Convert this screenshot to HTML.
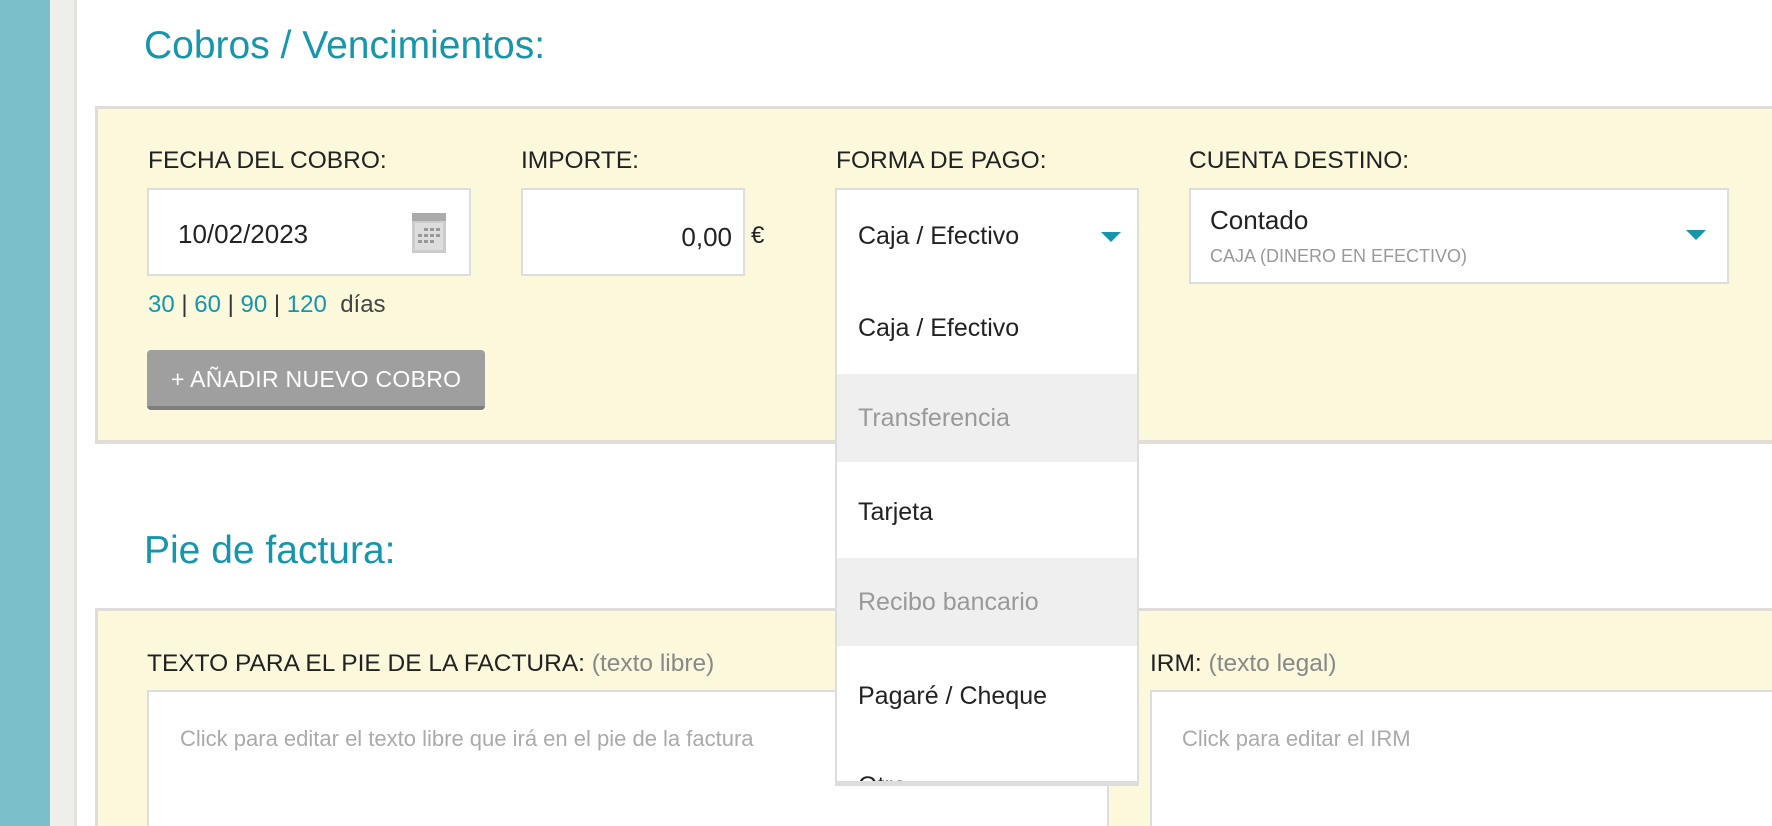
<!DOCTYPE html>
<html style="width:1772px;height:826px;overflow:hidden"><head><meta charset="utf-8"><style>
*{box-sizing:border-box;margin:0;padding:0}
body{width:1772px;height:826px;overflow:hidden;background:#fff;font-family:"Liberation Sans",sans-serif;position:relative;color:#222}
.abs{position:absolute}
.h{color:#1596ab;font-size:39px;white-space:nowrap}
.lbl{font-size:24.5px;color:#222;white-space:nowrap}
.panel{background:#fcf8dc;border:3px solid #e0ddd8}
.box{background:#fff;border:2px solid #ddd}
.item{position:absolute;left:0;width:100%;height:92px;font-size:25px;padding-left:21px;line-height:92px}
</style></head><body>
<div class="abs" style="left:0;top:0;width:50px;height:826px;background:#7bbfcb"></div>
<div class="abs" style="left:50px;top:0;width:24px;height:826px;background:#efefe9"></div>
<div class="abs" style="left:74px;top:0;width:3px;height:826px;background:#e2e2dc"></div>

<div class="abs h" style="left:144px;top:24px">Cobros / Vencimientos:</div>

<div class="abs panel" style="left:95px;top:106px;width:1690px;height:338px;border-bottom-width:4px"></div>
<div class="abs lbl" style="left:148px;top:147px">FECHA DEL COBRO:</div>
<div class="abs lbl" style="left:521px;top:147px">IMPORTE:</div>
<div class="abs lbl" style="left:836px;top:147px">FORMA DE PAGO:</div>
<div class="abs lbl" style="left:1189px;top:147px">CUENTA DESTINO:</div>

<div class="abs box" style="left:147px;top:188px;width:324px;height:88px"></div>
<div class="abs" style="left:178px;top:219px;font-size:26px">10/02/2023</div>
<svg class="abs" style="left:412px;top:211px" width="34" height="42" viewBox="0 0 34 42"><rect x="0" y="2" width="34" height="40" fill="#ccc"/><rect x="0" y="2" width="34" height="8" fill="#aaa"/><rect x="3" y="12" width="28" height="27" fill="#ddd"/><g fill="#999"><rect x="12" y="17" width="4" height="3"/><rect x="18" y="17" width="4" height="3"/><rect x="24" y="17" width="4" height="3"/><rect x="6" y="23" width="4" height="3"/><rect x="12" y="23" width="4" height="3"/><rect x="18" y="23" width="4" height="3"/><rect x="24" y="23" width="4" height="3"/><rect x="6" y="29" width="4" height="3"/><rect x="12" y="29" width="4" height="3"/><rect x="18" y="29" width="4" height="3"/></g></svg>
<div class="abs" style="left:148px;top:291px;font-size:24px;color:#1596ab;white-space:nowrap">30 <span style="color:#333">|</span> 60 <span style="color:#333">|</span> 90 <span style="color:#333">|</span> 120 &nbsp;<span style="color:#444">días</span></div>
<div class="abs" style="left:147px;top:350px;width:338px;height:60px;background:#9e9f9e;border-bottom:4px solid #7d7e7d;border-radius:4px;color:#fff;font-size:23px;line-height:58px;padding-left:24px;white-space:nowrap;letter-spacing:0.3px">+ AÑADIR NUEVO COBRO</div>

<div class="abs box" style="left:521px;top:188px;width:224px;height:88px"></div>
<div class="abs" style="left:600px;top:222px;width:132px;text-align:right;font-size:26px">0,00</div>
<div class="abs" style="left:751px;top:222px;font-size:24px">€</div>

<div class="abs box" style="left:1189px;top:188px;width:540px;height:96px"></div>
<div class="abs" style="left:1210px;top:205px;font-size:26px">Contado</div>
<div class="abs" style="left:1210px;top:246px;font-size:18px;color:#999;white-space:nowrap">CAJA (DINERO EN EFECTIVO)</div>
<div class="abs" style="left:1686px;top:230px;width:0;height:0;border-left:10px solid transparent;border-right:10px solid transparent;border-top:10px solid #1596ab"></div>

<div class="abs h" style="left:144px;top:529px">Pie de factura:</div>
<div class="abs panel" style="left:95px;top:608px;width:1690px;height:230px"></div>
<div class="abs lbl" style="left:147px;top:650px">TEXTO PARA EL PIE DE LA FACTURA: <span style="color:#888">(texto libre)</span></div>
<div class="abs lbl" style="left:1150px;top:650px">IRM: <span style="color:#888">(texto legal)</span></div>
<div class="abs box" style="left:147px;top:690px;width:962px;height:150px"></div>
<div class="abs" style="left:180px;top:726px;font-size:22px;color:#aaa;white-space:nowrap">Click para editar el texto libre que irá en el pie de la factura</div>
<div class="abs box" style="left:1150px;top:690px;width:622px;height:150px;border-right:none"></div>
<div class="abs" style="left:1182px;top:726px;font-size:22px;color:#aaa">Click para editar el IRM</div>

<div class="abs" style="left:835px;top:188px;width:304px;height:598px;background:#fff;border:2px solid #ddd;border-bottom:5px solid #ddd;overflow:hidden">
 <div class="item" style="top:0">Caja / Efectivo</div>
 <div class="abs" style="left:264px;top:42px;width:0;height:0;border-left:10px solid transparent;border-right:10px solid transparent;border-top:10px solid #1596ab"></div>
 <div class="item" style="top:92px">Caja / Efectivo</div>
 <div class="item" style="top:184px;background:#efefef;color:#999;height:88px;line-height:88px">Transferencia</div>
 <div class="item" style="top:276px">Tarjeta</div>
 <div class="item" style="top:368px;background:#efefef;color:#999;height:88px;line-height:88px">Recibo bancario</div>
 <div class="item" style="top:460px">Pagaré / Cheque</div>
 <div class="item" style="top:550px">Otro</div>
</div>
</body></html>
